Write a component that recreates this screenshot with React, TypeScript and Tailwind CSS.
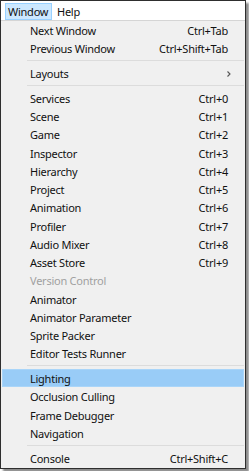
import React from "react";

type Item =
  | { kind: "item"; label: string; shortcut?: string; disabled?: boolean; active?: boolean; submenu?: boolean }
  | { kind: "sep" };

const items: Item[] = [
  { kind: "item", label: "Next Window", shortcut: "Ctrl+Tab" },
  { kind: "item", label: "Previous Window", shortcut: "Ctrl+Shift+Tab" },
  { kind: "sep" },
  { kind: "item", label: "Layouts", submenu: true },
  { kind: "sep" },
  { kind: "item", label: "Services", shortcut: "Ctrl+0" },
  { kind: "item", label: "Scene", shortcut: "Ctrl+1" },
  { kind: "item", label: "Game", shortcut: "Ctrl+2" },
  { kind: "item", label: "Inspector", shortcut: "Ctrl+3" },
  { kind: "item", label: "Hierarchy", shortcut: "Ctrl+4" },
  { kind: "item", label: "Project", shortcut: "Ctrl+5" },
  { kind: "item", label: "Animation", shortcut: "Ctrl+6" },
  { kind: "item", label: "Profiler", shortcut: "Ctrl+7" },
  { kind: "item", label: "Audio Mixer", shortcut: "Ctrl+8" },
  { kind: "item", label: "Asset Store", shortcut: "Ctrl+9" },
  { kind: "item", label: "Version Control", disabled: true },
  { kind: "item", label: "Animator" },
  { kind: "item", label: "Animator Parameter" },
  { kind: "item", label: "Sprite Packer" },
  { kind: "item", label: "Editor Tests Runner" },
  { kind: "sep" },
  { kind: "item", label: "Lighting", active: true },
  { kind: "item", label: "Occlusion Culling" },
  { kind: "item", label: "Frame Debugger" },
  { kind: "item", label: "Navigation" },
  { kind: "sep" },
  { kind: "item", label: "Console", shortcut: "Ctrl+Shift+C" },
];

const MenuRow = ({ item }: { item: Item }) => {
  if (item.kind === "sep") {
    return (
      <div className="h-[6.5px] flex items-center pl-[26px] pr-[1px]">
        <div className="h-px w-full bg-[#dcdcdc]" />
      </div>
    );
  }

  return (
    <div
      className={`h-[18.25px] mx-px flex items-center pl-[27px] pr-[15px] border ${
        item.active ? "bg-[#99ccf7] border-[#a9d5f9]" : "border-transparent"
      } ${item.disabled ? "text-[#a0a0a0]" : "text-[#111]"}`}
    >
      <span className="flex-1 pt-px">{item.label}</span>
      {item.shortcut && <span className="pt-px">{item.shortcut}</span>}
      {item.submenu && (
        <svg width="6" height="8" viewBox="0 0 6 8" className="mr-[-4px] mt-[2px]">
          <path d="M1.5 1.5 L4 4 L1.5 6.5" fill="none" stroke="#555" strokeWidth="1.1" />
        </svg>
      )}
    </div>
  );
};

export default function App() {
  return (
    <div className="w-[249px] h-[471px] bg-white font-['Noto_Sans','Liberation_Sans',sans-serif] text-[11px] tracking-[-0.25px] leading-none">
      <div className="w-[246px] border border-[#2e2e2e] bg-[#f0f0f0] shadow-[3px_3px_2px_rgba(0,0,0,0.45)]">
        <div className="h-[20px] bg-white border-b border-[#d5d5d5] flex items-end pl-[4px] gap-[5px]">
          <div className="h-[17px] pl-[2px] flex items-center bg-[#cce8ff] border border-[#99d1ff] w-[47px] text-[#111]">
            Window
          </div>
          <span className="h-[17px] flex items-center text-[#111]">Help</span>
        </div>
        <div className="pb-px">
          {items.map((item, i) => (
            <MenuRow key={i} item={item} />
          ))}
        </div>
      </div>
    </div>
  );
}
